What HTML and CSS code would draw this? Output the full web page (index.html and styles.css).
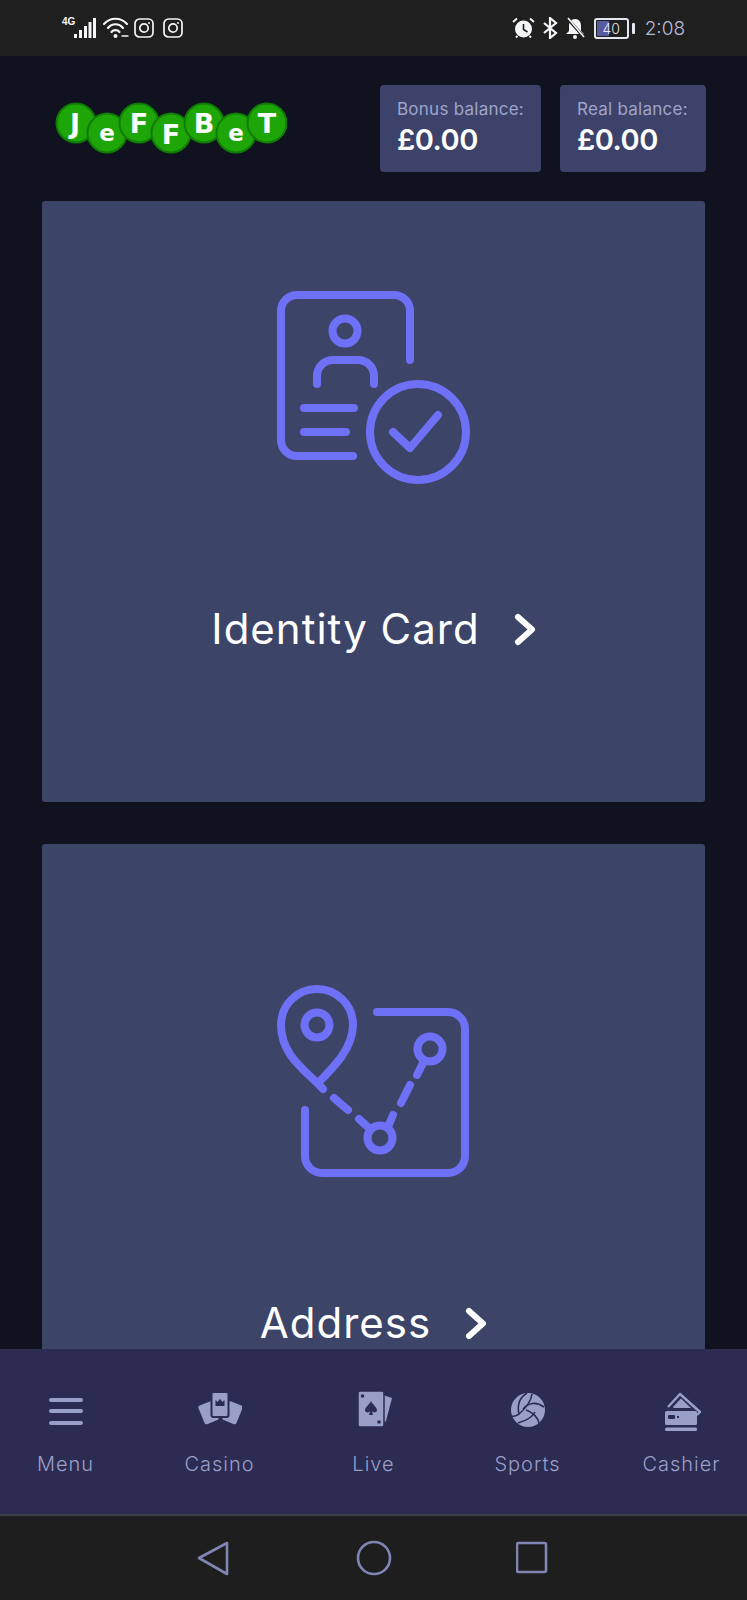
FILE: index.html
```html
<!DOCTYPE html>
<html lang="en">
<head>
  <meta charset="UTF-8" />
  <meta name="viewport" content="width=device-width, initial-scale=1.0"/>
  <title>JeffBet - Verification</title>
  <link rel="stylesheet" href="styles.css">
</head>
<body>
  <div class="screen">

    <div class="status-bar">
      <div class="status-left">
        <span class="net-type">4G</span>
        <svg class="signal" width="22" height="22" viewBox="0 0 22 22" fill="#f4f5f8">
          <rect x="0" y="17" width="3" height="4"/><rect x="5" y="13" width="3" height="8"/><rect x="10" y="9" width="3" height="12"/><rect x="14.5" y="5" width="3" height="16"/><rect x="19" y="1" width="3" height="20"/>
        </svg>
        <svg class="wifi" width="26" height="22" viewBox="0 0 26 22" fill="none" stroke="#f4f5f8" stroke-width="2.2" stroke-linecap="round">
          <path d="M1 7 C7 0 18 0 24 7"/><path d="M5 11 C9 6 16 6 20 11"/><path d="M8.5 15 C10.5 12.5 14.5 12.5 16.5 15"/>
          <circle cx="12.5" cy="19" r="2" fill="#f4f5f8" stroke="none"/>
          <path d="M19 19 H25" stroke-width="1.4"/>
        </svg>
        <svg class="insta" width="20" height="20" viewBox="0 0 20 20" fill="none" stroke="#f4f5f8" stroke-width="1.7">
          <rect x="1" y="1" width="18" height="18" rx="4.5"/><circle cx="10" cy="10" r="4.2"/><circle cx="15" cy="5" r="1" fill="#f4f5f8" stroke="none"/>
        </svg>
        <svg class="insta" width="20" height="20" viewBox="0 0 20 20" fill="none" stroke="#f4f5f8" stroke-width="1.7">
          <rect x="1" y="1" width="18" height="18" rx="4.5"/><circle cx="10" cy="10" r="4.2"/><circle cx="15" cy="5" r="1" fill="#f4f5f8" stroke="none"/>
        </svg>
      </div>
      <div class="status-right">
        <svg width="23" height="22" viewBox="0 0 23 22">
          <circle cx="11.5" cy="12" r="8.5" fill="#f4f5f8"/>
          <path d="M11.5 7 V12.5 L15.5 15" fill="none" stroke="#1f1f1f" stroke-width="1.6"/>
          <path d="M1 5 L5 1.5 M22 5 L18 1.5 M4 20.5 L5.5 19 M19 20.5 L17.5 19" stroke="#f4f5f8" stroke-width="2"/>
        </svg>
        <svg width="16" height="22" viewBox="0 0 16 22" fill="none" stroke="#f4f5f8" stroke-width="2.2">
          <path d="M2 6 L14 16 L8 21 V1 L14 6 L2 16"/>
        </svg>
        <svg width="20" height="22" viewBox="0 0 20 22">
          <path d="M10 2 C14 2 16 5 16 9 V14 L19 17 H1 L4 14 V9 C4 5 6 2 10 2 Z" fill="#f4f5f8"/>
          <circle cx="10" cy="20" r="2" fill="#f4f5f8"/>
          <path d="M2 1 L18 19" stroke="#1f1f1f" stroke-width="3"/>
          <path d="M3 1 L19 20" stroke="#f4f5f8" stroke-width="1.6"/>
        </svg>
        <div class="battery">
          <div class="battery-body">
            <div class="battery-level"></div>
            <span>40</span>
          </div>
          <div class="battery-tip"></div>
        </div>
        <span class="clock">2:08</span>
      </div>
    </div>

    <header class="top-bar">
      <svg class="logo" width="232" height="54" viewBox="0 0 232 54">
        <g fill="#1ea508" stroke="#0f7d05" stroke-width="2">
          <circle cx="21" cy="22" r="19.5"/>
          <circle cx="52" cy="32" r="19.5"/>
          <circle cx="84" cy="22" r="19.5"/>
          <circle cx="116" cy="32" r="19.5"/>
          <circle cx="149" cy="22" r="19.5"/>
          <circle cx="181" cy="32" r="19.5"/>
          <circle cx="212" cy="22" r="19.5"/>
        </g>
        <g class="logo-text" text-anchor="middle">
          <text x="20" y="32" font-size="27">J</text>
          <text x="52" y="40" font-size="23">e</text>
          <text x="84" y="32" font-size="27">F</text>
          <text x="116" y="43" font-size="27">F</text>
          <text x="149" y="32" font-size="27">B</text>
          <text x="181" y="40" font-size="23">e</text>
          <text x="212" y="32" font-size="27">T</text>
        </g>
      </svg>
      <div class="balances">
        <div class="balance balance-bonus">
          <div class="balance-label">Bonus balance:</div>
          <div class="balance-value">£0.00</div>
        </div>
        <div class="balance balance-real">
          <div class="balance-label">Real balance:</div>
          <div class="balance-value">£0.00</div>
        </div>
      </div>
    </header>

    <main class="content">
      <a class="doc-card doc-card-identity">
        <svg class="doc-icon" width="220" height="210" viewBox="0 0 220 210" fill="none" stroke="#6e70f6" stroke-width="8" stroke-linecap="round" stroke-linejoin="round">
          <path d="M150 80 V31 a16 16 0 0 0 -16 -16 H37 a16 16 0 0 0 -16 16 V160 a16 16 0 0 0 16 16 H93"/>
          <circle cx="85" cy="51" r="12.5"/>
          <path d="M57 104 V96 a16 16 0 0 1 16 -16 H98 a16 16 0 0 1 16 16 V104"/>
          <path d="M44 128 H94 M44 152 H86"/>
          <circle cx="158" cy="152" r="48"/>
          <path d="M133 152 L150 168 L178 135"/>
        </svg>
        <div class="doc-title">
          <span>Identity Card</span>
          <svg width="22" height="33" viewBox="0 0 22 33" fill="none" stroke="#fff" stroke-width="6" stroke-linecap="round" stroke-linejoin="round"><path d="M4 4 L18 16.5 L4 29"/></svg>
        </div>
      </a>

      <a class="doc-card doc-card-address">
        <svg class="doc-icon" width="220" height="210" viewBox="0 0 220 210" fill="none" stroke="#6e70f6" stroke-width="8" stroke-linecap="round" stroke-linejoin="round">
          <path d="M63 119 C45 100 21 85 21 55 A36 36 0 0 1 93 55 C93 78 74 97 58 113"/>
          <circle cx="57" cy="55" r="12.5"/>
          <path d="M117 42 H188 a17 17 0 0 1 17 17 V186 a17 17 0 0 1 -17 17 H62 a17 17 0 0 1 -17 -17 V140"/>
          <circle cx="120" cy="168" r="12.5"/>
          <circle cx="170" cy="79" r="12.5"/>
          <path d="M74 128 L88 140 M99 149 L110 159 M133 145 L128 157 M150 115 L141 133 M157 105 L163 93"/>
        </svg>
        <div class="doc-title">
          <span>Address</span>
          <svg width="22" height="33" viewBox="0 0 22 33" fill="none" stroke="#fff" stroke-width="6" stroke-linecap="round" stroke-linejoin="round"><path d="M4 4 L18 16.5 L4 29"/></svg>
        </div>
      </a>
    </main>

    <nav class="tab-bar">
      <div class="tab">
        <svg width="44" height="44" viewBox="0 0 44 44" fill="none" stroke="#9a9fc8" stroke-width="4" stroke-linecap="round">
          <path d="M7 12 H37 M7 23 H37 M7 35 H37"/>
        </svg>
        <span>Menu</span>
      </div>
      <div class="tab">
        <svg width="44" height="44" viewBox="0 0 44 44" fill="#9a9fc8">
          <rect x="2" y="0" width="15" height="20" rx="2" transform="translate(1 15) rotate(-22 9 10)"/>
          <rect x="27" y="0" width="15" height="20" rx="2" transform="translate(0 15) rotate(22 35 10)"/>
          <rect x="13.5" y="4" width="17" height="25" rx="2" stroke="#2c2b52" stroke-width="2"/>
          <path d="M17.5 12 L19.5 14 L22 11 L24.5 14 L26.5 12 V18 H17.5 Z" fill="#2c2b52"/>
        </svg>
        <span>Casino</span>
      </div>
      <div class="tab">
        <svg width="44" height="44" viewBox="0 0 44 44" fill="#9a9fc8">
          <path d="M28 6 L40 10 L34 33 L30 36 Z"/>
          <rect x="6" y="3" width="26" height="36" rx="2" stroke="#2c2b52" stroke-width="1.5"/>
          <circle cx="10.5" cy="8" r="1.8" fill="#2c2b52"/>
          <circle cx="27" cy="34" r="1.8" fill="#2c2b52"/>
          <path d="M19 13 C21 17 25 19 25 22 C25 25 21 25 20 23 L21 27 H17 L18 23 C17 25 13 25 13 22 C13 19 17 17 19 13 Z" fill="#2c2b52"/>
        </svg>
        <span>Live</span>
      </div>
      <div class="tab">
        <svg width="44" height="44" viewBox="0 0 44 44">
          <circle cx="22" cy="22" r="17" fill="#9a9fc8"/>
          <g fill="none" stroke="#2c2b52" stroke-width="1.6">
            <path d="M21 5 C13 10 11 17 13 26"/>
            <path d="M26 6 C25 14 20 20 13 26 C10 28 8 29 6 28"/>
            <path d="M38 19 C30 13 22 15 17 21"/>
            <path d="M20 22 C27 24 32 30 33 35"/>
            <path d="M12 35 C19 33 26 30 29 24"/>
          </g>
        </svg>
        <span>Sports</span>
      </div>
      <div class="tab">
        <svg width="44" height="44" viewBox="0 0 44 44">
          <path d="M8 19 L20 6 L40 24 L37 27" fill="none" stroke="#9a9fc8" stroke-width="2.4" stroke-linejoin="round"/>
          <path d="M13 19 L21 10.5 L31 20 H14 Z" fill="#9a9fc8"/>
          <rect x="5" y="23" width="32" height="14" rx="1.5" fill="#9a9fc8"/>
          <rect x="8" y="27" width="7" height="4" rx="1" fill="#2c2b52"/>
          <rect x="17" y="28" width="2" height="2" fill="#2c2b52"/>
          <rect x="5" y="39.5" width="32" height="3.5" rx="1.5" fill="#9a9fc8"/>
        </svg>
        <span>Cashier</span>
      </div>
    </nav>

    <div class="nav-bar">
      <svg width="36" height="36" viewBox="0 0 36 36" fill="none" stroke="#8085b4" stroke-width="2.6" stroke-linejoin="round">
        <path d="M31 3 L3 18 L31 34 Z"/>
      </svg>
      <svg width="36" height="36" viewBox="0 0 36 36" fill="none" stroke="#8085b4" stroke-width="2.6">
        <circle cx="18" cy="18" r="16"/>
      </svg>
      <svg width="36" height="36" viewBox="0 0 36 36" fill="none" stroke="#8085b4" stroke-width="2.6" stroke-linejoin="round">
        <rect x="1" y="3" width="29" height="29" rx="1.5"/>
      </svg>
    </div>

  </div>
</body>
</html>
```

FILE: styles.css
```css
body {
  margin: 0;
  font-family: Inter, "Open Sans", sans-serif;
  background: #10121f;
}

.screen {
  width: 747px;
  height: 1600px;
  display: flex;
  flex-direction: column;
  overflow: hidden;
  background: #10121f;
}

/* phone status bar */
.status-bar {
  flex: 0 0 56px;
  display: flex;
  justify-content: space-between;
  align-items: center;
  background: #1f1f1f;
  padding: 0 62px 0 62px;
  box-sizing: border-box;
}

.status-left {
  display: flex;
  align-items: center;
}

.net-type {
  font-family: "Liberation Sans", sans-serif;
  font-size: 10px;
  font-weight: 700;
  color: #f4f5f8;
  width: 12px;
  align-self: flex-start;
  margin-top: -1px;
}

.wifi {
  margin-left: 7px;
}

.insta {
  margin-left: 9px;
}

.wifi + .insta {
  margin-left: 5px;
}

.status-right {
  display: flex;
  align-items: center;
  gap: 7px;
}

.battery {
  display: flex;
  align-items: center;
  gap: 3px;
  margin-left: 2px;
}

.battery-body {
  position: relative;
  width: 31px;
  height: 17px;
  border: 2px solid #e4e6f0;
  border-radius: 3px;
  display: flex;
  justify-content: center;
  align-items: center;
}

.battery-level {
  position: absolute;
  left: 1px;
  top: 1px;
  bottom: 1px;
  width: 12px;
  background: #565aa0;
}

.battery-body span {
  position: relative;
  font-size: 14px;
  font-weight: 300;
  color: #e4e6f0;
}

.battery-tip {
  width: 3px;
  height: 11px;
  background: #e4e6f0;
  border-radius: 1px;
}

.clock {
  font-size: 19px;
  font-weight: 300;
  color: #b6bad8;
  margin-left: 3px;
}

/* logo and balances */
.top-bar {
  flex: 0 0 145px;
  display: flex;
  justify-content: space-between;
  align-items: flex-start;
  padding: 29px 41px 0 55px;
  box-sizing: border-box;
}

.logo {
  margin-top: 16px;
}

.logo-text text {
  font-family: "DejaVu Sans", sans-serif;
  font-weight: 700;
  fill: #fff;
}

.balances {
  display: flex;
  gap: 19px;
}

.balance {
  height: 87px;
  box-sizing: border-box;
  background: #3c4269;
  border-radius: 4px;
  padding: 13px 0 0 17px;
}

.balance-bonus {
  width: 161px;
}

.balance-real {
  width: 146px;
}

.balance-label {
  font-size: 17px;
  letter-spacing: 0.25px;
  line-height: 23px;
  color: #a0a4cc;
  white-space: nowrap;
}

.balance-value {
  font-size: 29px;
  letter-spacing: -0.5px;
  line-height: 37px;
  font-weight: 600;
  color: #fff;
}

/* document cards */
.content {
  flex: 1;
  min-height: 0;
  padding: 0 42px;
  display: flex;
  flex-direction: column;
  gap: 42px;
  overflow: hidden;
}

.doc-card {
  flex-shrink: 0;
  background: #3c4468;
  border-radius: 3px;
  display: flex;
  flex-direction: column;
  align-items: center;
  box-sizing: border-box;
}

.doc-card-identity {
  height: 601px;
  padding-top: 79px;
}

.doc-card-address {
  height: 601px;
  padding-top: 126px;
}

.doc-icon {
  display: block;
  margin-left: -7px;
}

.doc-title {
  margin-top: 114px;
  display: flex;
  align-items: center;
  gap: 34px;
  font-size: 42px;
  letter-spacing: 1px;
  line-height: 50px;
  color: #fff;
}

.doc-card-address .doc-title {
  margin-top: 118px;
}

/* bottom tabs */
.tab-bar {
  flex: 0 0 165px;
  display: grid;
  grid-template-columns: repeat(5, 154px);
  justify-content: center;
  background: #2c2b52;
  padding-top: 39px;
  box-sizing: border-box;
}

.tab {
  display: flex;
  flex-direction: column;
  align-items: center;
  gap: 18px;
  font-size: 20px;
  font-weight: 300;
  letter-spacing: 1px;
  line-height: 28px;
  color: #9a9fc8;
}

.nav-bar {
  flex: 0 0 86px;
  box-sizing: border-box;
  display: flex;
  justify-content: center;
  align-items: center;
  gap: 124px;
  background: #1e1e1e;
  border-top: 2px solid #3f3f4a;
}
```
